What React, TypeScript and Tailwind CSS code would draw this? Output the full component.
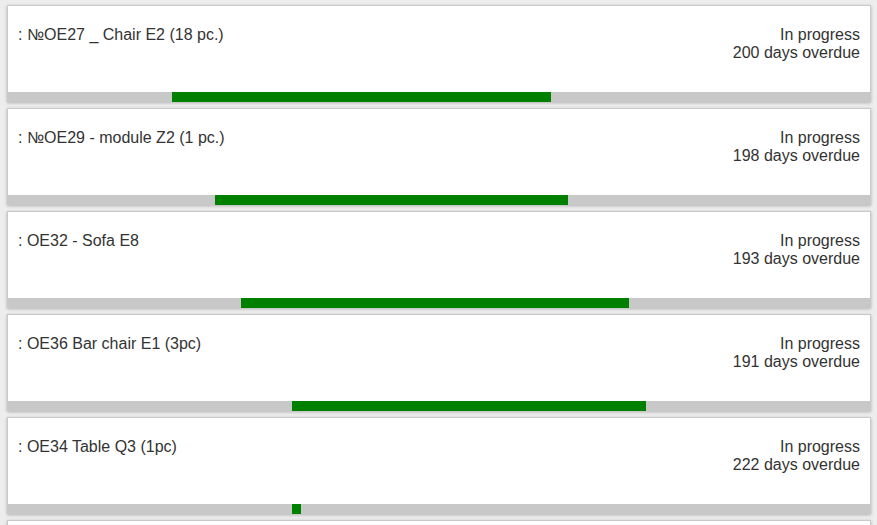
const orders = [
  { id: 1, name: ": №OE27 _ Chair E2 (18 pc.)", status: "In progress", overdue: "200 days overdue", left: 164, width: 379 },
  { id: 2, name: ": №OE29 - module Z2 (1 pc.)", status: "In progress", overdue: "198 days overdue", left: 207, width: 353 },
  { id: 3, name: ": OE32 - Sofa E8", status: "In progress", overdue: "193 days overdue", left: 233, width: 388 },
  { id: 4, name: ": OE36 Bar chair E1 (3pc)", status: "In progress", overdue: "191 days overdue", left: 284, width: 354 },
  { id: 5, name: ": OE34 Table Q3 (1pc)", status: "In progress", overdue: "222 days overdue", left: 284, width: 9 },
  { id: 6, name: ": OE35 Shelf A1", status: "In progress", overdue: "180 days overdue", left: 300, width: 200 },
]

const App = () => {
  return (
    <div className="h-[525px] overflow-hidden bg-[#ededed] pl-[7px] pt-[5px] font-['Liberation_Sans',Arial,sans-serif] text-[16px] leading-[18px] text-[#333]">
      <div className="flex w-[864px] flex-col gap-[6px]">
        {orders.map((item) => (
          <div
            key={item.id}
            className="flex h-[97px] shrink-0 flex-col border border-b-0 border-[#c9c9c9] bg-white shadow-[0_1px_3px_rgba(0,0,0,0.25)]"
          >
            <div className="flex flex-1 justify-between pl-[10px] pr-[10px] pt-[20px]">
              <span>{item.name}</span>
              <div className="text-right">
                <p>{item.status}</p>
                <p>{item.overdue}</p>
              </div>
            </div>
            <div className="flex h-[10px] bg-[#c8c8c8]">
              <div style={{ width: item.left }} />
              <div className="bg-[#008000]" style={{ width: item.width }} />
            </div>
          </div>
        ))}
      </div>
    </div>
  )
}

export default App
